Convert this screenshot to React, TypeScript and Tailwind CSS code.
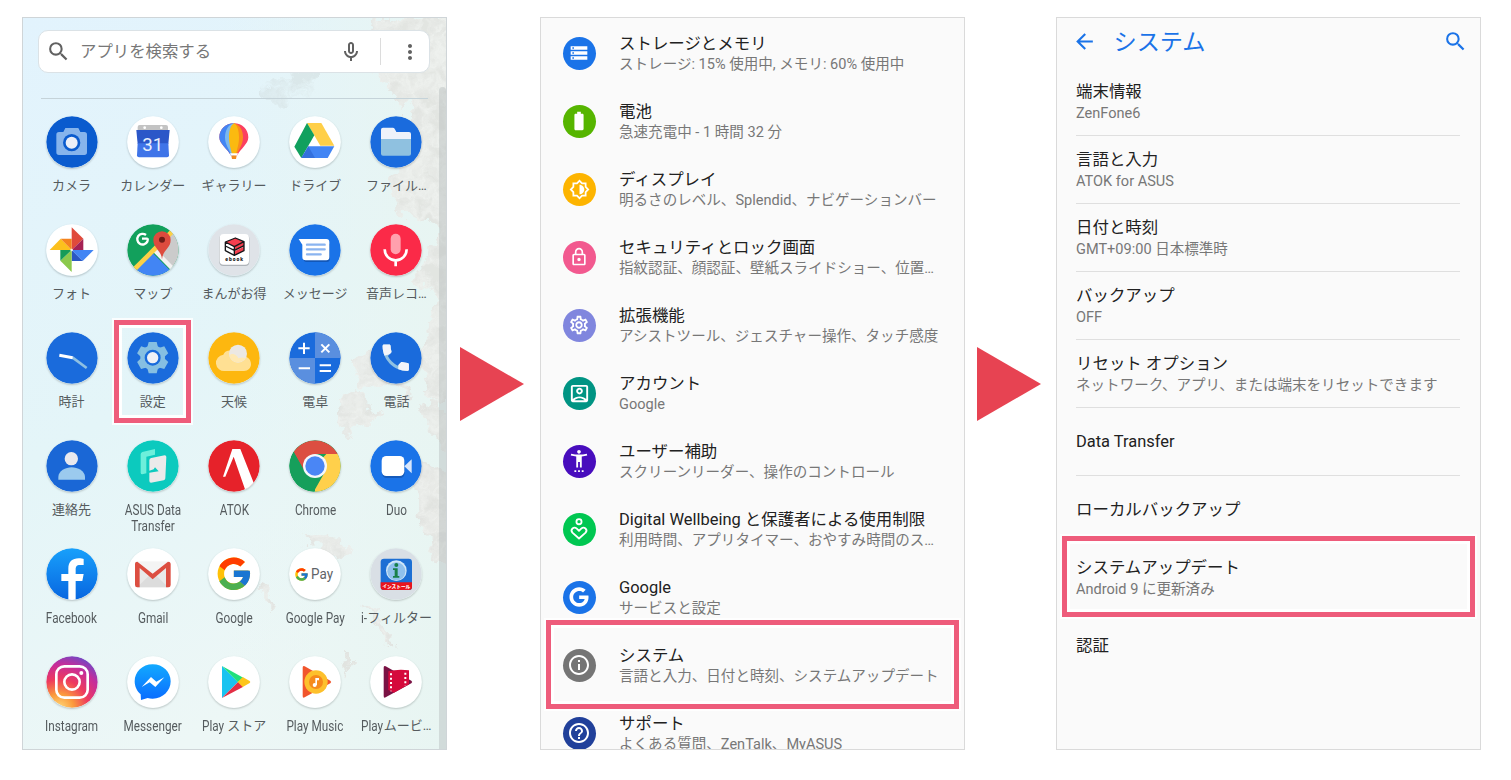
import { ReactNode } from 'react'
import {
  MdArrowBack,
  MdBatteryFull,
  MdHelpOutline,
  MdMoreVert,
  MdOutlineAccountBox,
  MdOutlineBrightness6,
  MdOutlineInfo,
  MdOutlineLock,
  MdOutlineMicNone,
  MdOutlineSettings,
  MdSearch,
  MdSettingsAccessibility,
  MdStorage,
} from 'react-icons/md'
import { FcGoogle } from 'react-icons/fc'
import { FaGoogle } from 'react-icons/fa'

// App icons share a 156 unit box, with the round plate filling it
const plate = (fill: string) => <circle cx="78" cy="78" r="77" fill={fill} />

const handset =
  'M6.62 10.79c1.44 2.83 3.76 5.14 6.59 6.59l2.2-2.2c.27-.27.67-.36 1.02-.24 1.12.37 2.33.57 3.57.57.55 0 1 .45 1 1V20c0 .55-.45 1-1 1-9.39 0-17-7.61-17-17 0-.55.45-1 1-1h3.5c.55 0 1 .45 1 1 0 1.25.2 2.45.57 3.57.11.35.03.74-.25 1.02l-2.2 2.2z'

const art: Record<string, ReactNode> = {
  camera: (
    <>
      {plate('#0a5bce')}
      <path d="M31 56q0-8 8-8h13l6-12h39l6 12h12q8 0 8 8v53q0 8-8 8H39q-8 0-8-8z" fill="#86b4ec" />
      <circle cx="77" cy="80" r="26" fill="#0a5bce" />
      <circle cx="77" cy="80" r="18" fill="#eceff7" />
    </>
  ),
  calendar: (
    <>
      {plate('#fff')}
      <path d="M32 44V33q0-6 6-6h79q6 0 6 6v11z" fill="#c3c3c3" />
      <circle cx="53" cy="35" r="4" fill="#fff" />
      <circle cx="103" cy="35" r="4" fill="#fff" />
      <path d="M28 42h100l-4 42H32z" fill="#2b57c8" />
      <path d="M32 82h92l2 36q0 6-6 6H36q-6 0-6-6z" fill="#3f74e8" />
      <text x="77" y="104" textAnchor="middle" fontSize="56" fontFamily="Roboto" fill="#e8effc">31</text>
    </>
  ),
  gallery: (
    <>
      {plate('#fff')}
      <path d="M78 22c-25 0-44 18-44 42 0 20 24 34 34 54h20c10-20 33-34 33-54 0-24-19-42-43-42z" fill="#fb4060" />
      <path d="M78 22c-25 0-44 18-44 42 0 20 24 34 34 54h10z" fill="#4285f4" />
      <path d="M78 22c-18 4-27 22-27 42 0 22 12 36 20 54h7z" fill="#7bb8ee" />
      <path d="M78 22c18 4 27 22 27 42 0 22-12 36-20 54h-7z" fill="#fb8c1c" />
      <path d="M78 22c-11 6-15 24-15 42 0 22 6 36 10 54h10c4-18 10-32 10-54 0-18-4-36-15-42z" fill="#fbba10" />
      <path d="M66 112h24l-2 6H68z" fill="#fff" />
      <path d="M70 119h16l-2 10H72z" fill="#f08a24" />
    </>
  ),
  drive: (
    <>
      {plate('#fff')}
      <path d="M54 21h43l39 68H94z" fill="#ffcf48" />
      <path d="M54 21l22 37-39 68-21-34z" fill="#11a05e" />
      <path d="M58 91h78l-20 35H37z" fill="#4285f4" />
      <path d="M58 91l20 35H37z" fill="#3370dd" />
    </>
  ),
  files: (
    <>
      {plate('#1a6bdd')}
      <path d="M33 41q0-6 6-6h30q4 0 7 7l3 6h38q6 0 6 6v24H33z" fill="#eef2fa" />
      <path d="M33 69h90v44q0 6-6 6H39q-6 0-6-6z" fill="#8fc1e0" />
    </>
  ),
  photos: (
    <>
      {plate('#fff')}
      <path d="M77 10l35 34-35 34z" fill="#e04a3b" />
      <path d="M112 44v34H77z" fill="#a52254" />
      <path d="M77 78h66l-33 33z" fill="#4285f4" />
      <path d="M77 78l33 33H77z" fill="#2a58c4" />
      <path d="M77 78v66l-34-34z" fill="#8bc94c" />
      <path d="M77 78l-34 32V78z" fill="#159b58" />
      <path d="M11 78l33-34 33 34z" fill="#fcc01d" />
      <path d="M44 44h33v34z" fill="#f4821f" />
      <circle cx="77" cy="78" r="4" fill="#fff" opacity=".8" />
    </>
  ),
  maps: (
    <>
      <clipPath id="mapsClip">
        <circle cx="78" cy="78" r="77" />
      </clipPath>
      <g clipPath="url(#mapsClip)">
        <rect width="156" height="156" fill="#12a05c" />
        <path d="M156 0v156L74 76z" fill="#cbcbcb" />
        <path d="M78 88L10 156h136z" fill="#4285f4" />
        <path d="M84 80l76 78" stroke="#f2f2f2" strokeWidth="13" />
        <path d="M20 138L140 18" stroke="#fcd046" strokeWidth="14" />
        <path d="M62 44H45M57 33a16 16 0 1 0 4 20q2-4 1-10" fill="none" stroke="#fff" strokeWidth="7" />
        <path d="M105 106c-2-28-26-33-26-58a26 26 0 0 1 52 0c0 25-24 30-26 58z" fill="#dd4b3e" />
        <circle cx="105" cy="47" r="9" fill="#701c17" />
      </g>
    </>
  ),
  manga: (
    <>
      {plate('#dfe3e8')}
      <rect x="34" y="32" width="90" height="94" rx="12" fill="#aeb3b8" />
      <rect x="35" y="30" width="88" height="92" rx="12" fill="#fff" />
      <path d="M52 54l30-12 26 11-29 15z" fill="#f53e4e" />
      <path d="M52 54l27 14v11L52 66zM52 68l27 14v11L52 80z" fill="#fff" />
      <path d="M79 68l29-15v13L79 80zM79 82l29-14v12L79 94z" fill="#f53e4e" />
      <path d="M52 54l30-12 26 11-29 15zM52 54v12l27 13 29-14V53M52 67v13l27 14 29-14V66M79 68v26" fill="none" stroke="#17171a" strokeWidth="4" strokeLinejoin="round" />
      <text x="80" y="111" textAnchor="middle" fontSize="15" fontFamily="Roboto" fontWeight="900" letterSpacing="3" fill="#222">ebook</text>
    </>
  ),
  messages: (
    <>
      {plate('#1a73e8')}
      <path d="M32 50l12 12v44q0 8 8 8h62q8 0 8-8V60z" fill="#1257b8" />
      <path d="M29 45h83q9 0 9 9v45q0 10-9 10H50q-10 0-10-10V62z" fill="#fff" />
      <path d="M54 62h53M54 76h53M54 91h41" stroke="#8ab4f0" strokeWidth="7" strokeLinecap="round" />
    </>
  ),
  recorder: (
    <>
      {plate('#fb2a48')}
      <rect x="62" y="29" width="30" height="62" rx="15" fill="#ffa0ad" />
      <path d="M44 76a33 33 0 0 0 66 0M77 109v18" fill="none" stroke="#fff" strokeWidth="8" />
    </>
  ),
  clock: (
    <>
      {plate('#1a6bdc')}
      <path d="M79 76l43 32" stroke="#8fc0e2" strokeWidth="8" />
      <path d="M40 70l40 7" stroke="#fff" strokeWidth="9" />
    </>
  ),
  settings: (
    <>
      {plate('#1a6bdc')}
      <g fill="#86bfe2">
        <circle cx="77" cy="77" r="37" />
        {[0, 60, 120, 180, 240, 300].map((a) => (
          <path key={a} d="M61 46l4-16h24l4 16z" transform={`rotate(${a} 77 77)`} />
        ))}
      </g>
      <circle cx="77" cy="77" r="24" fill="#1a6bdc" />
      <circle cx="77" cy="77" r="17" fill="#f1f1f6" />
    </>
  ),
  weather: (
    <>
      {plate('#fdb70f')}
      <path d="M51 117a24 24 0 0 1-5-49c5-17 36-18 44 4 20-4 39 5 39 24 0 12-9 21-21 21z" fill="#ffe093" />
      <circle cx="90" cy="65" r="27" fill="#ece8e3" />
      <path d="M64 70c10-10 24 0 27 9 9-4 16-3 22 0-8 14-40 21-49-9z" fill="#ffe9b4" />
    </>
  ),
  calculator: (
    <>
      {plate('#1a6bdc')}
      <path d="M78 1a77 77 0 0 1 77 77H78zM78 155A77 77 0 0 1 1 78h77z" fill="#5a8fdf" />
      <path d="M28 49h34M45 32v34M29 109h34M92 100h34M92 117h34M97 37l24 24M121 37L97 61" stroke="#fff" strokeWidth="6" />
    </>
  ),
  phone: (
    <>
      {plate('#1a6bdc')}
      <clipPath id="phoneEnds">
        <path d="M30 30h40v34l-30 8zM86 86l34-10v46H84z" />
      </clipPath>
      <path transform="translate(24.5 24.5) scale(4.4)" d={handset} fill="#8fc1e2" />
      <g clipPath="url(#phoneEnds)" fill="#f2f4fa">
        <path transform="translate(24.5 24.5) scale(4.4)" d={handset} />
      </g>
    </>
  ),
  contacts: (
    <>
      {plate('#1a67d6')}
      <circle cx="76" cy="56" r="20" fill="#e9e9ee" />
      <path d="M37 119v-8c0-18 22-29 40-29s40 11 40 29v8z" fill="#9bcaee" />
    </>
  ),
  transfer: (
    <>
      {plate('#0ccabe')}
      <path d="M84 27v17L58 50v50l-12 3q-5 0-5-5V43q0-5 5-7z" fill="#6defdb" />
      <path d="M73 54l40-8q5 0 5 5l-3 64q0 5-5 6l-38 7q-5 0-5-6V98l28-4-11-12-4 6-13 4V61q0-6 6-7z" fill="#ebeaea" />
    </>
  ),
  atok: (
    <>
      {plate('#e6222a')}
      <path d="M73 27h24l40 101q-11 14-26 20L77 50 52 110h-7z" fill="#fff" />
    </>
  ),
  chrome: (
    <>
      {plate('#169f5b')}
      <path d="M78 78L112 42h34A77 77 0 0 1 78 155z" fill="#ffd04b" />
      <path d="M78 42h68A77 77 0 0 0 14 36l32 58z" fill="#dc4e41" />
      <path d="M109 94l-35 61a77 77 0 0 1-60-119l33 58z" fill="#169f5b" />
      <circle cx="78" cy="78" r="36" fill="#f5f7fa" />
      <circle cx="78" cy="78" r="29" fill="#4a86f5" />
    </>
  ),
  duo: (
    <>
      {plate('#1a73e8')}
      <rect x="36" y="54" width="68" height="60" rx="14" fill="#155bbb" />
      <path d="M103 79l22-21v42z" fill="#d8e6fb" />
      <rect x="35" y="48" width="68" height="60" rx="14" fill="#fff" />
    </>
  ),
  facebook: (
    <>
      <linearGradient id="fb" x2="0" y2="1">
        <stop stopColor="#18a0fb" />
        <stop offset="1" stopColor="#0866e0" />
      </linearGradient>
      {plate('url(#fb)')}
      <path d="M67 155V99H46V78h21V62c0-21 12-31 31-31 7 0 13 1 15 2v18h-11c-11 0-13 6-13 13v14h24l-4 21H89v56q-11 2-22 0z" fill="#fff" />
    </>
  ),
  gmail: (
    <>
      {plate('#fff')}
      <path d="M26 41h103v77H26z" fill="#e9e9e9" />
      <path d="M30 118l47-45 47 45z" fill="#dcdcdc" />
      <path d="M30 41h95L77 80z" fill="#f4f4f4" />
      <path d="M24 47q0-6 7-6l46 36 46-36q8 0 8 6v64q0 7-7 7h-7V60L77 94 38 60v58h-7q-7 0-7-7z" fill="#dc4e41" />
    </>
  ),
  google: (
    <>
      {plate('#fff')}
      <FcGoogle x="19" y="19" size={117} />
    </>
  ),
  gpay: (
    <>
      {plate('#fff')}
      <FcGoogle x="15" y="57" size={45} />
      <text x="66" y="94" fontSize="42" fontFamily="Roboto" textLength="66" lengthAdjust="spacingAndGlyphs" fill="#5f6368">Pay</text>
    </>
  ),
  filter: (
    <>
      {plate('#d9dfe5')}
      <rect x="32" y="32" width="94" height="94" rx="10" fill="#1d6fd4" />
      <circle cx="79" cy="68" r="31" fill="#cfe6f8" />
      <circle cx="79" cy="70" r="27" fill="#8fc0ec" />
      <circle cx="79" cy="51" r="6" fill="#18804a" />
      <path d="M69 61h14v23h5v5H69v-5h5V66h-5z" fill="#18804a" />
      <path d="M32 103h94v14q0 9-9 9H41q-9 0-9-9z" fill="#e8141c" />
      <text x="79" y="120" textAnchor="middle" fontSize="14" fontFamily="Noto Sans CJK JP" fontWeight="900" fill="#fff">インストール</text>
    </>
  ),
  instagram: (
    <>
      <radialGradient id="ig" cx=".25" cy="1.02" r="1.15">
        <stop stopColor="#ffdc7d" />
        <stop offset=".25" stopColor="#fb9a3c" />
        <stop offset=".5" stopColor="#ee3a5e" />
        <stop offset=".75" stopColor="#c62c9a" />
        <stop offset="1" stopColor="#5b4fd0" />
      </radialGradient>
      {plate('url(#ig)')}
      <g fill="none" stroke="#fff" strokeWidth="8">
        <rect x="31" y="31" width="94" height="94" rx="24" />
        <circle cx="78" cy="78" r="23" />
      </g>
      <circle cx="106" cy="51" r="6" fill="#fff" />
    </>
  ),
  messenger: (
    <>
      <linearGradient id="msg" x2="0" y2="1">
        <stop stopColor="#12a9ff" />
        <stop offset="1" stopColor="#0a6cff" />
      </linearGradient>
      {plate('#fff')}
      <path d="M77 25c31 0 54 23 54 51s-23 52-54 52q-8 0-15-2l-20 6-1-17C30 106 23 92 23 76c0-28 23-51 54-51z" fill="url(#msg)" />
      <path d="M44 93l28-30 16 14 24-13-27 29-17-14z" fill="#fff" />
    </>
  ),
  store: (
    <>
      {plate('#fff')}
      <path d="M42 30v96l48-48z" fill="#19c3f0" />
      <path d="M42 30l64 35-16 14z" fill="#20e07c" />
      <path d="M42 126l64-34-15-15z" fill="#e32e45" />
      <path d="M104 63l21 12q4 3 0 6l-21 12-15-15z" fill="#fdc51b" />
    </>
  ),
  music: (
    <>
      {plate('#fff')}
      <path d="M41 35q0-7 6-4l77 43q5 4 0 8l-77 42q-6 3-6-4z" fill="#f1552c" />
      <circle cx="81" cy="78" r="35" fill="#fdc02c" />
      <circle cx="81" cy="78" r="21" fill="#f68a1c" />
      <circle cx="77" cy="87" r="6" fill="#fff" />
      <path d="M79 87V66h11v7h-6v14z" fill="#fff" />
    </>
  ),
  movies: (
    <>
      {plate('#fff')}
      <path d="M41 35q0-7 6-4l77 43q5 4 0 8l-77 42q-6 3-6-4z" fill="#7a1244" />
      <path d="M55 46q30-8 62-3v42L72 110l-17-8z" fill="#d50a3c" />
      <path d="M63 52v54M106 50v40" stroke="#fff" strokeWidth="6" strokeDasharray="6 7" />
    </>
  ),
}

interface AppItem {
  icon: string
  jp?: string
  en?: string
}

const apps: AppItem[] = [
  { icon: 'camera', jp: 'カメラ' },
  { icon: 'calendar', jp: 'カレンダー' },
  { icon: 'gallery', jp: 'ギャラリー' },
  { icon: 'drive', jp: 'ドライブ' },
  { icon: 'files', jp: 'ファイル…' },
  { icon: 'photos', jp: 'フォト' },
  { icon: 'maps', jp: 'マップ' },
  { icon: 'manga', jp: 'まんがお得' },
  { icon: 'messages', jp: 'メッセージ' },
  { icon: 'recorder', jp: '音声レコ…' },
  { icon: 'clock', jp: '時計' },
  { icon: 'settings', jp: '設定' },
  { icon: 'weather', jp: '天候' },
  { icon: 'calculator', jp: '電卓' },
  { icon: 'phone', jp: '電話' },
  { icon: 'contacts', jp: '連絡先' },
  { icon: 'transfer', en: 'ASUS Data Transfer' },
  { icon: 'atok', en: 'ATOK' },
  { icon: 'chrome', en: 'Chrome' },
  { icon: 'duo', en: 'Duo' },
  { icon: 'facebook', en: 'Facebook' },
  { icon: 'gmail', en: 'Gmail' },
  { icon: 'google', en: 'Google' },
  { icon: 'gpay', en: 'Google Pay' },
  { icon: 'filter', en: 'i-', jp: 'フィルター' },
  { icon: 'instagram', en: 'Instagram' },
  { icon: 'messenger', en: 'Messenger' },
  { icon: 'store', en: 'Play', jp: ' ストア' },
  { icon: 'music', en: 'Play Music' },
  { icon: 'movies', en: 'Play', jp: 'ムービ…' },
]

const DigitalWellbeing = () => (
  <svg viewBox="0 0 60 60" className="mb-px size-[22px]" fill="none" stroke="currentColor" strokeWidth="5">
    <circle cx="30" cy="10" r="7" />
    <path d="M30 56L12 40c-7-9 4-18 12-11l6 6 6-6c8-7 19 2 12 11z" strokeLinejoin="round" />
  </svg>
)

const settings = [
  { icon: <MdStorage />, color: 'bg-[#1a73e8]', title: 'ストレージとメモリ', sub: 'ストレージ: 15% 使用中, メモリ: 60% 使用中' },
  { icon: <MdBatteryFull size={22} />, color: 'bg-[#56b500]', title: '電池', sub: '急速充電中 - 1 時間 32 分' },
  { icon: <MdOutlineBrightness6 size={21} />, color: 'bg-[#fdb400]', title: 'ディスプレイ', sub: '明るさのレベル、Splendid、ナビゲーションバー' },
  { icon: <MdOutlineLock />, color: 'bg-[#f2598f]', title: 'セキュリティとロック画面', sub: '指紋認証、顔認証、壁紙スライドショー、位置…' },
  { icon: <MdOutlineSettings size={22} />, color: 'bg-[#8086de]', title: '拡張機能', sub: 'アシストツール、ジェスチャー操作、タッチ感度' },
  { icon: <MdOutlineAccountBox size={23} />, color: 'bg-[#009483]', title: 'アカウント', sub: 'Google' },
  { icon: <MdSettingsAccessibility size={22} />, color: 'bg-[#480dbd]', title: 'ユーザー補助', sub: 'スクリーンリーダー、操作のコントロール' },
  { icon: <DigitalWellbeing />, color: 'bg-[#00c751]', title: 'Digital Wellbeing と保護者による使用制限', sub: '利用時間、アプリタイマー、おやすみ時間のス…' },
  { icon: <FaGoogle />, color: 'bg-[#1a73e8]', title: 'Google', sub: 'サービスと設定' },
  { icon: <MdOutlineInfo size={24} />, color: 'bg-[#757575]', title: 'システム', sub: '言語と入力、日付と時刻、システムアップデート' },
  { icon: <MdHelpOutline size={24} />, color: 'bg-[#21409a]', title: 'サポート', sub: 'よくある質問、ZenTalk、MyASUS' },
]

const systemItems = [
  { title: '端末情報', sub: 'ZenFone6', line: true },
  { title: '言語と入力', sub: 'ATOK for ASUS', line: true },
  { title: '日付と時刻', sub: 'GMT+09:00 日本標準時', line: true },
  { title: 'バックアップ', sub: 'OFF', line: true },
  { title: 'リセット オプション', sub: 'ネットワーク、アプリ、または端末をリセットできます', line: true },
  { title: 'Data Transfer', line: true },
  { title: 'ローカルバックアップ' },
  { title: 'システムアップデート', sub: 'Android 9 に更新済み' },
  { title: '認証' },
]

// Pale satellite coast behind the app drawer
const Wallpaper = () => (
  <svg className="absolute inset-0" width="423" height="731" viewBox="0 0 423 731">
    <defs>
      <linearGradient id="sea" x2=".35" y2="1">
        <stop stopColor="#e2f3fd" />
        <stop offset=".55" stopColor="#e4f5f8" />
        <stop offset="1" stopColor="#edf7f6" />
      </linearGradient>
      <linearGradient id="shallow">
        <stop stopColor="#e8f5f3" stopOpacity="0" />
        <stop offset="1" stopColor="#e8f5f2" />
      </linearGradient>
      <filter id="coast" x="-.1" y="-.1" width="1.2" height="1.2" colorInterpolationFilters="sRGB">
        <feTurbulence type="fractalNoise" baseFrequency=".06" numOctaves="5" seed="4" result="n" />
        <feDisplacementMap in="SourceGraphic" in2="n" scale="26" xChannelSelector="R" yChannelSelector="G" />
      </filter>
      <filter id="relief" colorInterpolationFilters="sRGB">
        <feTurbulence type="turbulence" baseFrequency=".045" numOctaves="5" seed="9" />
        <feColorMatrix values="0 0 0 0 .66  0 0 0 0 .66  0 0 0 0 .64  2 0 0 0 -.1" />
        <feComposite in2="SourceGraphic" operator="in" />
      </filter>
    </defs>
    <rect width="423" height="731" fill="url(#sea)" />
    <rect x="200" width="223" height="731" fill="url(#shallow)" />
    <g filter="url(#coast)" opacity=".85">
      <path d="M350 0l-10 46 20 14 24 28 0 26-18 50 10 30 40 20-24 46 24 22-22 56 14 40 26 30h30V0zM330 344l22-16 30 14-4 22-24 4-16 4zM316 384l18-14 12 16 14 10-20 12-16 10-12-10zM372 365l18 6-10 18zM396 388l50-8v70l-26-20z" fill="#f0f1ee" />
      <path d="M278 516l36 4 18 16-26 6zM392 440l50 20v120l-20-30-26-50zM344 588l14 8 14 32-12-8zM232 570l7-2 12 22-6 4zM320 640l8 0-4 18z" fill="#eeefec" />
    </g>
    <g filter="url(#coast)" opacity=".16">
      <g filter="url(#relief)">
        <path d="M350 0l-10 46 20 14 24 28 0 26-18 50 10 30 40 20-24 46 24 22-22 56 14 40 26 30h30V0zM330 344l22-16 30 14-4 22-24 4-16 4zM316 384l18-14 12 16 14 10-20 12-16 10-12-10zM372 365l18 6-10 18zM396 388l50-8v70l-26-20z" />
        <path d="M240 60l60-10-20 30-30 10zM278 516l36 4 18 16-26 6zM392 440l50 20v120l-20-30-26-50zM344 588l14 8 14 32-12-8zM232 570l7-2 12 22-6 4zM320 640l8 0-4 18z" />
      </g>
    </g>
  </svg>
)

// Marker frame: pink band with a white halo on both sides
const Highlight = ({ className }: { className: string }) => (
  <div className={`absolute border-5 border-[#ee5c7b] bg-transparent shadow-[0_0_0_2px_#fffc,inset_0_0_0_3px_#fff] ${className}`} />
)

const Arrow = ({ className }: { className: string }) => (
  <svg className={`shrink-0 ${className}`} width="64" height="74" viewBox="0 0 64 74">
    <path d="M0 0l64 37L0 74z" fill="#e74352" />
  </svg>
)

const AppLabel = ({ en, jp }: AppItem) => (
  <div className="flex h-[18px] justify-center text-center text-[13px] leading-[18px] whitespace-pre text-[#555b5e]">
    {en && !jp && (
      <span className={`origin-top scale-x-[.84] pt-px text-[14px] leading-[16px] ${en.length > 12 ? 'w-[90px] shrink-0 whitespace-normal' : ''}`}>{en}</span>
    )}
    {en && jp && <span className={`origin-left scale-x-[.84] text-[14px] ${en === 'i-' ? '-mr-px' : '-mr-1'}`}>{en}</span>}
    {jp && <span>{jp}</span>}
  </div>
)

const AppDrawer = () => (
  <div className="relative h-[733px] w-[425px] shrink-0 overflow-hidden border border-[#cfd5d8]">
    <Wallpaper />
    <div className="relative flex flex-col">
      <div className="mt-3 ml-[15px] flex h-[43px] w-[392px] items-center rounded-[10px] border border-[#dbe2e6] bg-white text-[#616161]">
        <MdSearch className="ml-[7px] size-[25px]" />
        <span className="ml-[9px] flex-1 pt-px text-[16.4px] text-[#777]">アプリを検索する</span>
        <MdOutlineMicNone className="size-6" />
        <div className="ml-[17px] h-[27px] w-px bg-[#dcdcdc]" />
        <MdMoreVert className="mr-[7px] ml-[17px] size-6" />
      </div>
      <div className="mt-[25px] ml-[18px] h-px w-[387px] bg-[#c5d3d9]" />
      <div className="mt-[17px] ml-2 grid w-[406px] auto-rows-[108.1px] grid-cols-5">
        {apps.map((app) => (
          <div key={app.icon} className="min-w-0">
            <svg viewBox="0 0 156 156" className="mx-auto size-[52px] rounded-full shadow-[0_1px_2px_#0003]">
              {art[app.icon]}
            </svg>
            <div className="mt-[9px]">
              <AppLabel {...app} />
            </div>
          </div>
        ))}
      </div>
    </div>
    <div className="absolute top-[69px] right-0 bottom-0 w-[7px] rounded-t bg-[#b4babb70]" />
    <Highlight className="top-[302px] left-[91px] h-[103px] w-[77px]" />
  </div>
)

const SettingsList = () => (
  <div className="relative h-[733px] w-[425px] shrink-0 overflow-hidden border border-[#dadada] bg-[#fafafa] pt-px">
    {settings.map((item) => (
      <div key={item.title} className="flex h-[68px] items-center pl-[22px]">
        <div className={`flex size-[33px] shrink-0 items-center justify-center rounded-full text-[20px] text-white ${item.color}`}>
          {item.icon}
        </div>
        <div className="ml-[23.5px] pt-[2px] whitespace-nowrap">
          <div className="text-[16.45px] leading-[21px] text-[#212121]">{item.title}</div>
          <div className="text-[14.55px] leading-[21px] text-[#777]">{item.sub}</div>
        </div>
      </div>
    ))}
    <Highlight className="top-[602px] left-[5px] h-[89px] w-[413px]" />
  </div>
)

const SystemScreen = () => (
  <div className="relative h-[733px] w-[425px] shrink-0 overflow-hidden border border-[#dadada] bg-[#fafafa]">
    <div className="flex h-[50px] items-center pl-[15px] text-[#1a73e8]">
      <MdArrowBack className="mb-[3px] size-[25px]" />
      <h1 className="ml-[17px] flex-1 text-[23.2px] leading-none">システム</h1>
      <MdSearch className="mr-3 mb-1 size-[25px]" />
    </div>
    <div className="ml-[19.5px] w-[384px]">
      {systemItems.map((item) => (
        <div key={item.title} className={`flex h-[68px] flex-col justify-center border-b pt-px ${item.line ? 'border-[#dfdfdf]' : 'border-transparent'}`}>
          <div className="text-[16.45px] leading-[22px] text-[#212121]">{item.title}</div>
          {item.sub && <div className="text-[14.55px] leading-[21px] whitespace-nowrap text-[#777]">{item.sub}</div>}
        </div>
      ))}
    </div>
    <Highlight className="top-[518px] left-[5px] h-[81px] w-[413px]" />
  </div>
)

export default function App() {
  return (
    <div className="flex h-[780px] w-[1511px] items-start overflow-hidden bg-white pt-[17px] pl-[22px] font-['Roboto','Noto_Sans_CJK_JP',sans-serif]">
      <AppDrawer />
      <Arrow className="mt-[330px] mr-[15.5px] ml-[13px]" />
      <SettingsList />
      <Arrow className="mt-[330px] mr-[15px] ml-[12px]" />
      <SystemScreen />
    </div>
  )
}
